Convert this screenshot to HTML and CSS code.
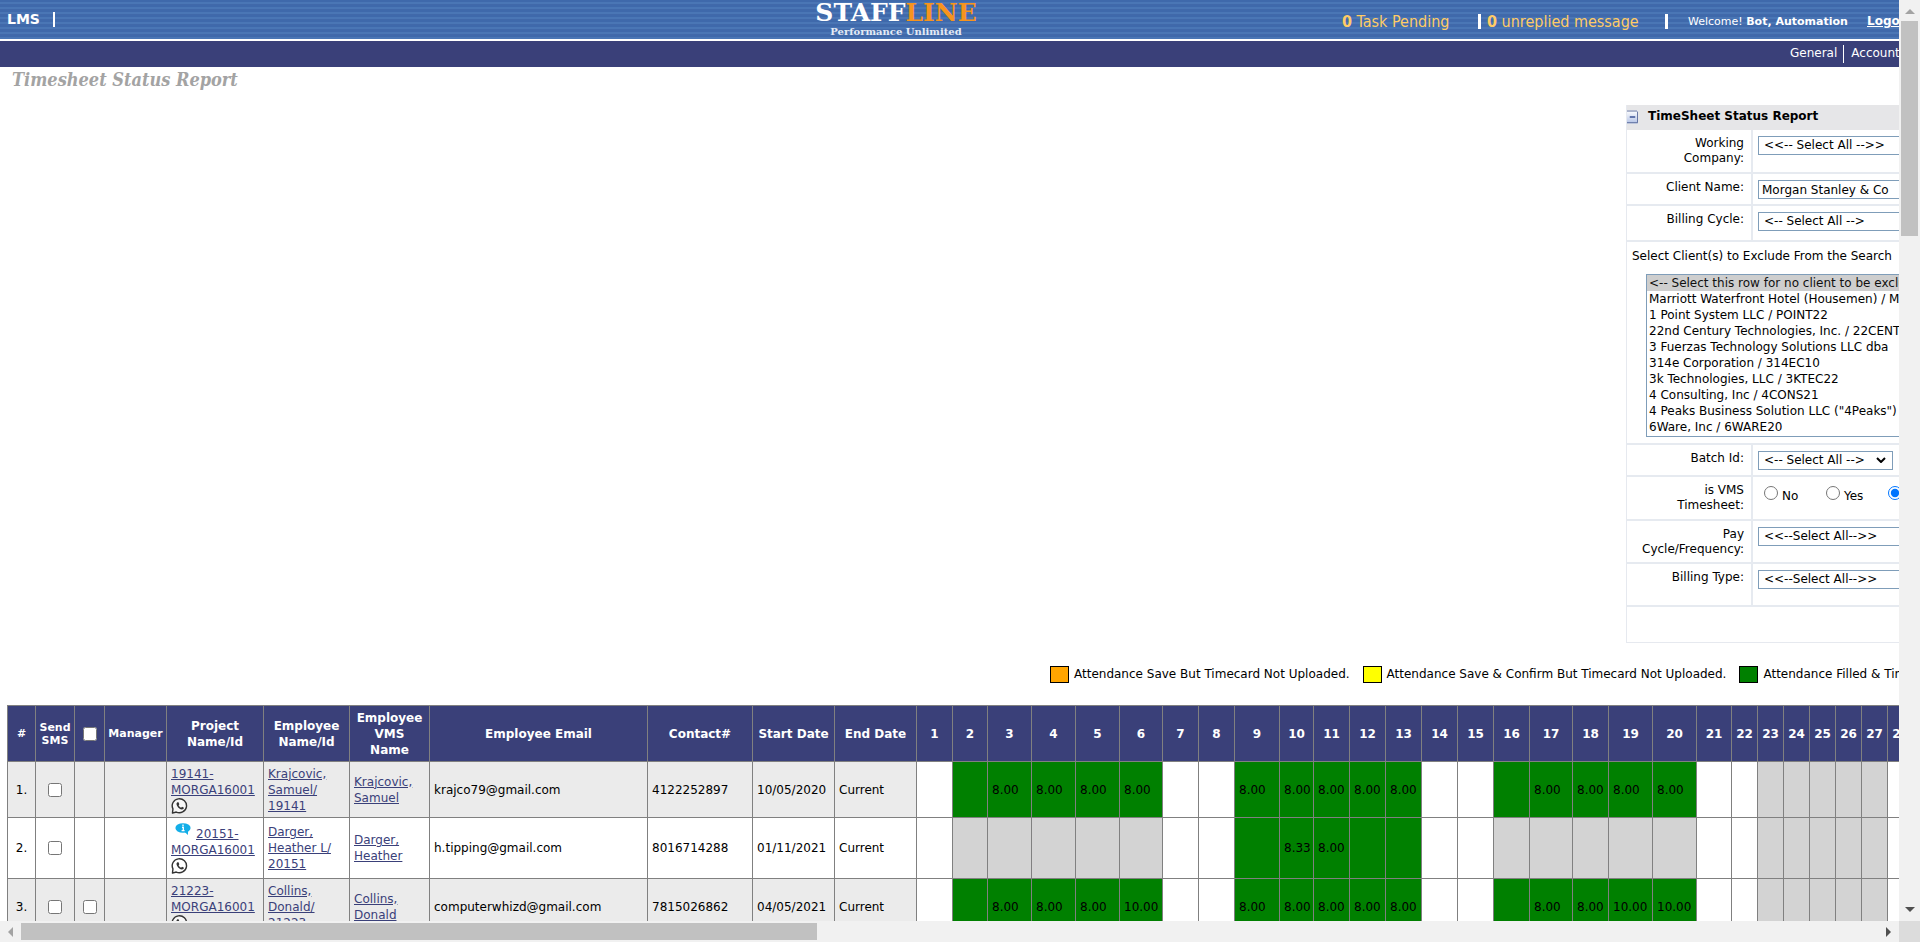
FILE: index.html
```html
<!DOCTYPE html>
<html lang="en">
<head>
<meta charset="utf-8">
<title>Timesheet Status Report</title>
<link rel="stylesheet" href="styles.css">
</head>
<body>
<svg class="defs" aria-hidden="true">
  <symbol id="whatsapp" viewBox="0 0 18 17">
    <path d="M1 16 L1.5 11.5 A7.6 7.4 0 1 1 5 14.9 Z" fill="#fff" fill-opacity=".6" stroke="#333" stroke-width="1.5" stroke-linejoin="round"/>
    <path d="M6.2 4.4 C5 5.2 5 6.7 6 8.4 C7.3 10.6 9.2 12.1 11 12.2 C12.3 12.2 13.2 11.3 13.2 10.4 L11.2 9.2 L10.1 10.3 C8.9 9.8 8.1 8.9 7.5 7.7 L8.3 6.6 L7.4 4.4 Z" fill="#333"/>
  </symbol>
  <symbol id="info" viewBox="0 0 16 12">
    <ellipse cx="8" cy="5" rx="7.6" ry="4.8" fill="#13aee8"/>
    <path d="M8.5 8 L13 12 L13 7 Z" fill="#13aee8"/>
    <path d="M8 1.6v1.6M7 4.4h1.3v3M6.6 7.6h3" stroke="#fff" stroke-width="1.3" fill="none"/>
  </symbol>
</svg>
<div class="window">
  <main class="page">
    <header class="banner">
      <div class="brand-left"><a href="#">LMS</a><span class="bar"></span></div>
      <div class="logo">
        <div class="logo-name">STAFF<span class="logo-accent">LINE</span></div>
        <div class="logo-tag">Performance Unlimited</div>
      </div>
      <div class="status">
        <a class="tasks" href="#"><b>0</b> Task Pending</a>
        <span class="bar bar-thick"></span>
        <a class="messages" href="#"><b>0</b> unreplied message</a>
        <span class="bar bar-thick"></span>
        <span class="welcome">Welcome! <b>Bot, Automation</b></span>
        <a class="logout" href="#">Logout</a>
      </div>
    </header>
    <nav class="menu">
      <div class="menu-items"><a href="#">General</a><a href="#">Accounts</a></div>
    </nav>
    <h1 class="title">Timesheet Status Report</h1>

    <form class="panel">
      <h2 class="panel-head">
        <button type="button" class="collapse" aria-label="Collapse"><svg viewBox="0 0 12 14"><defs><linearGradient id="g" x2="0" y2="1"><stop stop-color="#fff"/><stop offset="1" stop-color="#b4c3e6"/></linearGradient></defs><rect width="12" height="14" fill="url(#g)"/><path d="M0 .5H11M0 13.2H11.5V1" stroke="#5a6a9a" fill="none"/><path d="M3 7h6" stroke="#223a86" stroke-width="1.4"/></svg></button>
        TimeSheet Status Report
      </h2>
      <div class="field r44"><label for="wc">Working Company:</label><div class="control"><select id="wc" class="wide"><option>&lt;&lt;-- Select All --&gt;&gt;</option></select></div></div>
      <div class="field r32"><label for="cn">Client Name:</label><div class="control"><input id="cn" class="wide" type="text" value="Morgan Stanley &amp; Co"></div></div>
      <div class="field r36"><label for="bc">Billing Cycle:</label><div class="control"><select id="bc" class="wide"><option>&lt;-- Select All --&gt;</option></select></div></div>
      <div class="exclude">
        <label for="ex">Select Client(s) to Exclude From the Search</label>
        <select id="ex" multiple size="10">
          <option selected>&lt;-- Select this row for no client to be excluded --&gt;</option>
          <option>Marriott Waterfront Hotel (Housemen) / MARRI</option>
          <option>1 Point System LLC / POINT22</option>
          <option>22nd Century Technologies, Inc. / 22CENT</option>
          <option>3 Fuerzas Technology Solutions LLC dba</option>
          <option>314e Corporation / 314EC10</option>
          <option>3k Technologies, LLC / 3KTEC22</option>
          <option>4 Consulting, Inc / 4CONS21</option>
          <option>4 Peaks Business Solution LLC ("4Peaks")</option>
          <option>6Ware, Inc / 6WARE20</option>
        </select>
      </div>
      <div class="field r32"><label for="bi">Batch Id:</label><div class="control"><span class="drop"><select id="bi"><option>&lt;-- Select All --&gt;</option></select><svg viewBox="0 0 10 6"><path d="M1 1l4 4 4-4" fill="none" stroke="#000" stroke-width="2"/></svg></span></div></div>
      <div class="field r44"><span class="label">is VMS Timesheet:</span><div class="control radios"><label><input type="radio" name="vms">No</label><label><input type="radio" name="vms">Yes</label><input type="radio" name="vms" aria-label="All" checked></div></div>
      <div class="field r43"><label for="pc">Pay Cycle/Frequency:</label><div class="control"><select id="pc" class="wide"><option>&lt;&lt;--Select All--&gt;&gt;</option></select></div></div>
      <div class="field r43"><label for="bt">Billing Type:</label><div class="control"><select id="bt" class="wide"><option>&lt;&lt;--Select All--&gt;&gt;</option></select></div></div>
      <div class="panel-foot"></div>
    </form>

    <div class="legend">
      <span><i class="chip orange"></i>Attendance Save But Timecard Not Uploaded.</span>
      <span><i class="chip yellow"></i>Attendance Save &amp; Confirm But Timecard Not Uploaded.</span>
      <span><i class="chip green"></i>Attendance Filled &amp; Timecard Uploaded.</span>
    </div>

    <table class="report">
      <colgroup>
        <col class="w28"><col class="w39"><col class="w30"><col class="w62"><col class="w97"><col class="w86"><col class="w80"><col class="w218"><col class="w105"><col class="w82"><col class="w82">
        <col class="w36"><col class="w35"><col class="w44"><col class="w44"><col class="w44"><col class="w43"><col class="w36"><col class="w36"><col class="w45"><col class="w34"><col class="w36"><col class="w36"><col class="w36"><col class="w36"><col class="w36"><col class="w36"><col class="w43"><col class="w36"><col class="w44"><col class="w44"><col class="w35"><col class="w26"><col class="w26"><col class="w26"><col class="w26"><col class="w26"><col class="w26"><col class="w26">
      </colgroup>
      <thead>
        <tr><th class="small">#</th><th class="small">Send SMS</th><th><input type="checkbox" aria-label="Select all"></th><th class="small">Manager</th><th>Project Name/Id</th><th>Employee Name/Id</th><th class="vms">Employee VMS Name</th><th>Employee Email</th><th>Contact#</th><th>Start Date</th><th>End Date</th><th>1</th><th>2</th><th>3</th><th>4</th><th>5</th><th>6</th><th>7</th><th>8</th><th>9</th><th>10</th><th>11</th><th>12</th><th>13</th><th>14</th><th>15</th><th>16</th><th>17</th><th>18</th><th>19</th><th>20</th><th>21</th><th>22</th><th>23</th><th>24</th><th>25</th><th>26</th><th>27</th><th>28</th></tr>
      </thead>
      <tbody>
        <tr class="odd">
          <td class="mid">1.</td><td class="mid"><input type="checkbox" aria-label="Send SMS 1"></td><td></td><td></td>
          <td><a href="#">19141-MORGA16001</a><svg class="wa"><use href="#whatsapp"/></svg></td>
          <td><a href="#">Krajcovic, Samuel/ 19141</a></td><td><a href="#">Krajcovic, Samuel</a></td><td>krajco79@gmail.com</td><td>4122252897</td><td>10/05/2020</td><td>Current</td>
          <td class="o"></td><td class="g"></td><td class="g">8.00</td><td class="g">8.00</td><td class="g">8.00</td><td class="g">8.00</td><td class="o"></td><td class="o"></td><td class="g">8.00</td><td class="g">8.00</td><td class="g">8.00</td><td class="g">8.00</td><td class="g">8.00</td><td class="o"></td><td class="o"></td><td class="g"></td><td class="g">8.00</td><td class="g">8.00</td><td class="g">8.00</td><td class="g">8.00</td><td class="o"></td><td class="o"></td><td class="n"></td><td class="n"></td><td class="n"></td><td class="n"></td><td class="n"></td><td class="o"></td>
        </tr>
        <tr class="tall">
          <td class="mid">2.</td><td class="mid"><input type="checkbox" aria-label="Send SMS 2"></td><td></td><td></td>
          <td><svg class="info"><use href="#info"/></svg><a href="#">20151-MORGA16001</a><svg class="wa"><use href="#whatsapp"/></svg></td>
          <td><a href="#">Darger, Heather L/ 20151</a></td><td><a href="#">Darger, Heather</a></td><td>h.tipping@gmail.com</td><td>8016714288</td><td>01/11/2021</td><td>Current</td>
          <td class="o"></td><td class="n"></td><td class="n"></td><td class="n"></td><td class="n"></td><td class="n"></td><td class="o"></td><td class="o"></td><td class="g"></td><td class="g">8.33</td><td class="g">8.00</td><td class="g"></td><td class="g"></td><td class="o"></td><td class="o"></td><td class="n"></td><td class="n"></td><td class="n"></td><td class="n"></td><td class="n"></td><td class="o"></td><td class="o"></td><td class="n"></td><td class="n"></td><td class="n"></td><td class="n"></td><td class="n"></td><td class="o"></td>
        </tr>
        <tr class="odd">
          <td class="mid">3.</td><td class="mid"><input type="checkbox" aria-label="Send SMS 3"></td><td class="mid"><input type="checkbox" aria-label="Select row 3"></td><td></td>
          <td><a href="#">21223-MORGA16001</a><svg class="wa"><use href="#whatsapp"/></svg></td>
          <td><a href="#">Collins, Donald/ 21223</a></td><td><a href="#">Collins, Donald</a></td><td>computerwhizd@gmail.com</td><td>7815026862</td><td>04/05/2021</td><td>Current</td>
          <td class="o"></td><td class="g"></td><td class="g">8.00</td><td class="g">8.00</td><td class="g">8.00</td><td class="g">10.00</td><td class="o"></td><td class="o"></td><td class="g">8.00</td><td class="g">8.00</td><td class="g">8.00</td><td class="g">8.00</td><td class="g">8.00</td><td class="o"></td><td class="o"></td><td class="g"></td><td class="g">8.00</td><td class="g">8.00</td><td class="g">10.00</td><td class="g">10.00</td><td class="o"></td><td class="o"></td><td class="n"></td><td class="n"></td><td class="n"></td><td class="n"></td><td class="n"></td><td class="o"></td>
        </tr>
      </tbody>
    </table>
  </main>
  <div class="vscroll"><i class="arrow up"></i><div class="vthumb"></div><i class="arrow down"></i></div>
  <div class="hscroll"><i class="arrow left"></i><div class="hthumb"></div><i class="arrow right"></i></div>
  <div class="corner"></div>
</div>
</body>
</html>
```
FILE: styles.css
```css
* { box-sizing: border-box; }
body {
  margin: 0;
  background: #fff;
  color: #000;
  font: 12px/15px Verdana, "DejaVu Sans", sans-serif;
}
input, select, button { font: inherit; margin: 0; }
.defs { display: none; }

.window {
  display: grid;
  grid-template: minmax(0, 1fr) 21px / minmax(0, 1fr) 21px;
  height: 100vh;
}
.page { overflow: hidden; min-width: 0; }

/* Banner */
.banner {
  display: grid;
  grid-template-columns: minmax(0, 467fr) 166px minmax(0, 533fr);
  height: 39px;
  padding-left: 7px;
  color: #fff;
  background: repeating-linear-gradient(#3f69ab 0 2px, #4a76b5 2px 4px, #4169aa 4px 5px);
  white-space: nowrap;
}
.banner a { color: inherit; text-decoration: none; }
.brand-left { display: flex; align-items: center; gap: 13px; font-size: 14px; font-weight: bold; }
.bar { width: 2px; height: 15px; background: #fff; flex: none; }
.bar-thick { width: 3px; }
.logo {
  display: flex;
  flex-direction: column;
  align-items: center;
  font-family: "Roboto Slab", "DejaVu Serif", serif;
  font-weight: bold;
}
.logo-name { font-size: 25px; line-height: 26px; }
.logo-accent { color: #f7941e; }
.logo-tag { color: #e4ebf5; font-size: 10px; line-height: 11px; }
.status {
  display: flex;
  align-items: center;
  justify-self: end;
  width: 557px;
  padding-top: 4px;
  overflow: hidden;
}
.status .tasks, .status .messages {
  color: #fc6;
  font: 16px/18px Tahoma, "DejaVu Sans Condensed", "DejaVu Sans", sans-serif;
}
.status .tasks { flex: 0 0 136px; }
.status .messages { flex: 0 0 178px; margin-left: 6px; }
.status .welcome { flex: 0 0 179px; margin-left: 20px; font-size: 11px; }
.status .logout { font-weight: bold; text-decoration: underline; }

/* Menu */
.menu {
  display: flex;
  justify-content: flex-end;
  height: 28px;
  border-top: 2px solid #fff;
  background: #3a4079;
}
.menu-items { display: flex; align-items: center; width: 117px; overflow: hidden; }
.menu-items a { flex: none; padding: 1px 6px 2px 8px; color: #fff; text-decoration: none; }
.menu-items a + a { padding-left: 7px; border-left: 1px solid #fff; }

.title {
  height: 38px;
  margin: 0;
  padding: 3px 12px;
  color: #a3a3a3;
  font: italic bold 18px/20px Georgia, "DejaVu Serif Condensed", "DejaVu Serif", serif;
}

/* Filter panel */
.panel {
  width: 273px;
  margin-left: auto;
  overflow: hidden;
  border-left: 1px solid #e6e9ef;
}
.panel-head {
  display: flex;
  align-items: center;
  gap: 10px;
  height: 25px;
  margin: 0;
  padding-bottom: 2px;
  background: #e6e6e8;
  font-size: 12px;
  white-space: nowrap;
}
.collapse { display: flex; width: 11px; height: 14px; padding: 0; border: 0; background: none; }
.collapse svg { width: 11px; height: 14px; }
.field {
  display: grid;
  grid-template-columns: 126px 1fr;
  border-bottom: 2px solid #e6eaf0;
}
.field > label, .field > .label {
  padding: 6px 7px 0 8px;
  border-right: 2px solid #e6eaf0;
  text-align: right;
}
.control { padding: 6px 0 0 5px; min-width: 0; }
.r32 { height: 32px; }
.r36 { height: 36px; }
.r43 { height: 43px; }
.r44 { height: 44px; }
.panel select, .panel input[type="text"] {
  display: block;
  appearance: none;
  height: 19px;
  padding: 0 5px;
  border: 1px solid #7f9db9;
  border-radius: 0;
  background: #fff;
  color: #000;
}
.panel input[type="text"] { padding: 0 3px; }
.panel .wide { width: 180px; }
.drop { position: relative; display: block; width: 135px; }
.drop select { width: 100%; }
.drop svg { position: absolute; right: 7px; top: 6px; width: 10px; height: 6px; }
.exclude {
  height: 203px;
  padding: 7px 0 0 5px;
  border-bottom: 2px solid #e6eaf0;
  white-space: nowrap;
}
.exclude label { display: block; height: 25px; }
.panel #ex {
  width: 380px;
  height: 163px;
  margin-left: 14px;
  padding: 0;
  overflow: hidden;
}
#ex option { height: 16px; min-height: 16px; padding: 1px 2px 0; line-height: 15px; }
.radios { display: flex; padding: 8px 0 0 11px; }
.radios label { display: flex; flex: 0 0 62px; gap: 4px; line-height: 22px; }
.radios input { flex: none; width: 14px; height: 14px; margin-top: 1px; }
.panel-foot { height: 36px; border-bottom: 1px solid #e6e9ef; }

/* Legend */
.legend {
  display: flex;
  gap: 13px;
  width: 849px;
  height: 62px;
  margin-left: auto;
  padding-top: 23px;
  overflow: hidden;
  white-space: nowrap;
}
.legend span { display: flex; flex: none; gap: 5px; line-height: 17px; }
.chip { width: 19px; height: 17px; border: 1px solid #000; }
.orange { background: orange; }
.yellow { background: yellow; }
.green { background: green; }

/* Report */
.report {
  width: 1906px;
  margin-left: 7px;
  table-layout: fixed;
  border-collapse: collapse;
  line-height: 16px;
}
.report th, .report td { padding: 0 2px 0 4px; border: 1px solid #808080; }
.report td { height: 56px; text-align: left; }
.report th { height: 56px; padding: 0; color: #fff; background: #3a4079; font-size: 12px; }
.report .small { font-size: 11px; line-height: 13px; }
.report .vms { padding: 0 5px; }
.report .mid { padding: 0; text-align: center; }
.report .tall td { height: 61px; }
.report .odd td { background: #ebebeb; }
.report tr td.o { background: #fff; }
.report tr td.g { background: green; }
.report tr td.n { background: #d3d3d3; }
.report a { color: #3a4079; }
.report input { display: block; width: 14px; height: 14px; margin: 0 auto; }
.wa { display: block; width: 18px; height: 16px; }
.info { width: 16px; height: 12px; margin: 0 5px 0 4px; vertical-align: 3px; }
.w26 { width: 26px; } .w28 { width: 28px; } .w30 { width: 30px; } .w34 { width: 34px; }
.w35 { width: 35px; } .w36 { width: 36px; } .w39 { width: 39px; } .w43 { width: 43px; }
.w44 { width: 44px; } .w45 { width: 45px; } .w62 { width: 62px; } .w80 { width: 80px; }
.w82 { width: 82px; } .w86 { width: 86px; } .w97 { width: 97px; } .w105 { width: 105px; }
.w218 { width: 218px; }

/* Scroll bars */
.vscroll, .hscroll { display: flex; justify-content: space-between; align-items: center; background: #f1f1f1; }
.vscroll { flex-direction: column; padding: 9px 0; }
.hscroll { padding: 0 8px; }
.vthumb { width: 17px; height: 215px; margin: 7px 0 auto; background: #c1c1c1; }
.hthumb { width: 796px; height: 17px; margin: 0 auto 0 8px; background: #c1c1c1; }
.corner { background: #dcdcdc; }
.arrow { border: 5px solid transparent; }
.up { border-top: 0; border-bottom-color: #a3a3a3; }
.down { border-bottom: 0; border-top-color: #505050; }
.left { border-left: 0; border-right-color: #a3a3a3; }
.right { border-right: 0; border-left-color: #505050; }
```
